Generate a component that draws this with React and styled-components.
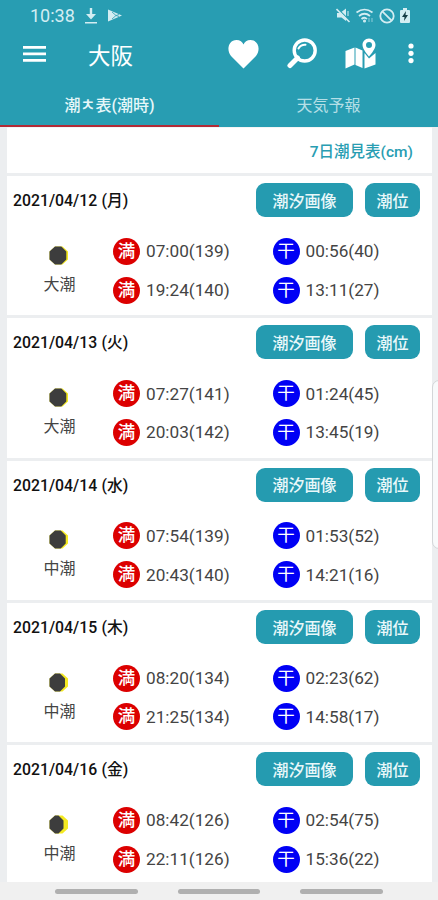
import React from "react";
import styled, { createGlobalStyle } from "styled-components";

const Global = createGlobalStyle`
  * { box-sizing: border-box; }
  body { margin: 0; background: #eceef0; font-family: Roboto, "Noto Sans CJK JP", sans-serif; }
  svg { display: block; flex: none; }
`;
const Screen = styled.div`
  position: relative; width: 438px; height: 900px; overflow: hidden;
  display: flex; flex-direction: column; background: #eceef0;
`;
const Header = styled.header`
  height: 127px; flex: none; background: #289db2; color: #fff;
  display: flex; flex-direction: column;
`;
const StatusBar = styled.div`
  height: 31px; padding: 0 28px 0 30px; display: flex; align-items: center;
  color: #d3edf2;
`;
const Clock = styled.span`
  width: 55px; font-size: 18px; line-height: 31px; white-space: nowrap;
`;
const StatusIcons = styled.div`
  display: flex; align-items: center; gap: ${(p) => p.$gap}px; margin-left: ${(p) => (p.$end ? "auto" : 0)};
`;
const Toolbar = styled.div`
  height: 45px; display: flex; align-items: center; padding: 0 24px 0 23px;
`;
const Title = styled.h1`
  margin: 5px 0 0 42px; font-size: 22.5px; font-weight: 400; line-height: 30px;
`;
const Actions = styled.div`
  margin-left: auto; display: flex; align-items: center;
  gap: 28px;
  & > :last-child { margin-left: 4px; }
`;
const Tabs = styled.nav`
  flex: 1; display: grid; grid-template-columns: 1fr 1fr;
`;
const Tab = styled.div`
  display: flex; align-items: center; justify-content: center; padding-top: 7px;
  font-size: 16px; font-weight: ${(p) => (p.$active ? 500 : 400)};
  color: ${(p) => (p.$active ? "#e6f7f9" : "#b5dfe6")};
  border-bottom: 2px solid ${(p) => (p.$active ? "#b22a35" : "#289db2")};
`;
const SmallGlyph = styled.span`
  width: 15px; padding-top: 4px; display: flex; justify-content: center; font-size: 16.5px; line-height: 20px; font-weight: 500;
`;
const List = styled.main`
  flex: none; height: 755px; padding: 0 6px 0 7px; overflow: hidden;
`;
const Summary = styled.div`
  height: 46px; background: #fff; display: flex; align-items: center; justify-content: flex-end;
  padding: 0 19px 2px 0; margin-bottom: 3.2px; border-top: 1px solid #f3f5f5;
  color: #289db2; font-size: 15.5px; font-weight: 500;
`;
const Card = styled.section`
  height: 139.3px; margin-bottom: 3px; background: #fff;
`;
const CardHead = styled.div`
  height: 41px; padding: 7px 12px 0 6px; display: flex; align-items: center;
`;
const DateText = styled.h2`
  margin: 0 auto 1px 0; font-size: 15.8px; font-weight: 500; color: #111; word-spacing: 0.5px;
`;
const Button = styled.button`
  width: ${(p) => p.$w}px; height: 34px; margin-left: 12px; padding: 0 0 1px; border: 0; border-radius: 9px;
  background: #259bb0; color: #e9f8fa; font: 500 16px Roboto, "Noto Sans CJK JP", sans-serif;
`;
const CardBody = styled.div`
  display: grid; grid-template-columns: 106px 159.5px 1fr; padding-top: 14.7px;
`;
const Phase = styled.div`
  display: flex; flex-direction: column; align-items: center; padding: 14px 1px 0 0;
  color: #444; font-size: 16px; line-height: 24px;
`;
const Moon = styled.svg`margin: 0 1px 8px 0;`;
const Times = styled.div`
  display: grid; grid-auto-rows: 38.8px;
`;
const Time = styled.div`
  display: flex; align-items: center; gap: 6px; font-size: 17.2px; color: #444;
  white-space: nowrap;
`;
const Badge = styled.span`
  width: 27px; height: 27px; border-radius: 50%; flex: none;
  display: flex; align-items: center; justify-content: center;
  color: #fff; font-size: 17.5px; font-weight: ${(p) => (p.$high ? 500 : 400)}; line-height: 27px;
  background: ${(p) => (p.$high ? "#dc0000" : "#0000f5")};
`;
const NavBar = styled.footer`
  height: 18px; background: #f0f0f0; display: flex; justify-content: center; gap: 40px; padding-top: 7px;
`;
const NavPill = styled.span`
  width: 82.5px; height: 4.5px; border-radius: 3px; background: #b0b0b0;
`;
const EdgeHandle = styled.div`
  position: absolute; left: 432px; top: 380px; width: 20px; height: 169px;
  background: #f8fafb; border: 1px solid #d3d6d8; border-radius: 7px;
`;

const days = [
  ["2021/04/12 (月)", "大潮", 1.7, ["07:00(139)", "19:24(140)"], ["00:56(40)", "13:11(27)"]],
  ["2021/04/13 (火)", "大潮", 1.7, ["07:27(141)", "20:03(142)"], ["01:24(45)", "13:45(19)"]],
  ["2021/04/14 (水)", "中潮", 2.3, ["07:54(139)", "20:43(140)"], ["01:53(52)", "14:21(16)"]],
  ["2021/04/15 (木)", "中潮", 3, ["08:20(134)", "21:25(134)"], ["02:23(62)", "14:58(17)"]],
  ["2021/04/16 (金)", "中潮", 4.5, ["08:42(126)", "22:11(126)"], ["02:54(75)", "15:36(22)"]],
];

function MoonPhase({ lit }) {
  const r = 19 - lit;
  return (
    <Moon width="20" height="19" viewBox="0 0 20 19">
      <path d="M6 .5H13.500L19 5.500V13.500L13.500 18.500H6L0.500 13.500V5.500Z" fill="#f4e920" />
      <path d={`M6 .5H${r - 5}L${r} 5.500V13.500L${r - 5} 18.500H6L0.500 13.500V5.500Z`} fill="#3d3d3d" />
    </Moon>
  );
}

function TimeList({ high, items }) {
  return (
    <Times>
      {items.map((t) => (
        <Time key={t}><Badge $high={high}>{high ? "満" : "干"}</Badge>{t}</Time>
      ))}
    </Times>
  );
}

const MenuIcon = () => (
  <svg width="23" height="18" viewBox="0 0 23 18" fill="#fff">
    <path d="M0 1h23v2.700H0zM0 7.500h23v2.700H0zM0 14h23v2.700H0z" />
  </svg>
);
const HeartIcon = () => (
  <svg width="31" height="30" viewBox="0 0 31 30" fill="#fff">
    <path d="M15.500 29.500L3 17C-2 11 .5 1 8.500 1C12 1 14.500 3 15.500 5.500C16.500 3 19 1 22.500 1C30.500 1 33 11 28 17Z" />
  </svg>
);
const SearchIcon = () => (
  <svg width="30" height="31" viewBox="0 0 30 31" fill="none" stroke="#fff" strokeLinecap="round">
    <circle cx="17.700" cy="12.500" r="10.500" strokeWidth="3.400" />
    <path d="M10.500 20L3 27.500" strokeWidth="5" />
    <path d="M11.500 10.500Q14 6.500 18.500 6.800" strokeWidth="2" />
  </svg>
);
const MapIcon = () => (
  <svg width="31" height="31" viewBox="0 0 31 31" fill="#fff">
    <path d="M.5 13L9.500 9.500V26.500L.5 30.500ZM10.500 9.500L17.500 12.500V30L10.500 27ZM19.500 15L24 20.500L30.500 15V26.500L19.500 30.500Z" />
    <path fillRule="evenodd" d="M24 .5C20 .5 17.500 3.500 17.500 7C17.500 11.500 24 18.500 24 18.500S30.500 11.500 30.500 7C30.500 3.500 28 .5 24 .5ZM24 4A3 3 0 1 1 24 10A3 3 0 1 1 24 4Z" />
  </svg>
);
const MoreIcon = () => (
  <svg width="6" height="21" viewBox="0 0 6 21" fill="#fff">
    <circle cx="3" cy="3" r="2.600" /><circle cx="3" cy="10.300" r="2.600" /><circle cx="3" cy="17.600" r="2.600" />
  </svg>
);
const DownloadIcon = () => (
  <svg width="12" height="16" viewBox="0 0 12 16" fill="currentColor">
    <path d="M4.800 0h2.400v6H11L6 11.500L1 6h3.800zM0 14h12v1.500H0z" />
  </svg>
);
const PlayIcon = () => (
  <svg width="14" height="13" viewBox="0 0 14 13">
    <path d="M0 .5L14 6.500L0 12.500Z" fill="currentColor" />
    <path d="M4 3l4 3.500l-4 3.500M8 6.500l3-1M8 6.500l3 1" stroke="#289db2" strokeWidth=".8" fill="none" />
  </svg>
);
const MuteIcon = () => (
  <svg width="15" height="15" viewBox="0 0 15 15" fill="currentColor">
    <path d="M1 5H4L10 .5V13L5.500 9.500H1Z" />
    <path d="M12 3v5" stroke="currentColor" />
    <path d="M1.500 .5L14 13" stroke="#289db2" strokeWidth="1.200" />
    <path d="M.5 1L13.500 14" stroke="currentColor" strokeWidth="1.600" />
  </svg>
);
const WifiIcon = () => (
  <svg width="18" height="15" viewBox="0 0 18 15" fill="none" stroke="currentColor" strokeWidth="1.700">
    <path d="M.5 4.500Q8.500 -1.500 16.500 4.500M3 8Q8.500 3.500 14 8M5.500 11Q8.500 8.500 11 11" />
    <circle cx="8.500" cy="13" r=".7" /><path d="M13 10v4M16 10v4" strokeWidth="1" opacity=".6" />
  </svg>
);
const BlockIcon = () => (
  <svg width="16" height="16" viewBox="0 0 16 16" fill="none" stroke="currentColor" strokeWidth="1.800">
    <circle cx="8" cy="8" r="6.700" /><path d="M3.300 3.300L12.700 12.700" />
  </svg>
);
const BatteryIcon = () => (
  <svg width="10" height="15" viewBox="0 0 10 15">
    <path d="M3 0h4v2h2q1 0 1 1v11q0 1-1 1H1q-1 0-1-1V3q0-1 1-1h2z" fill="currentColor" />
    <path d="M6 3L2 9h2.500L4 13l4-6H5.500z" fill="#173d45" />
  </svg>
);

export default function App() {
  return (
    <>
      <Global />
      <Screen>
        <Header>
          <StatusBar>
            <Clock>10:38</Clock>
            <StatusIcons $gap={11}><DownloadIcon /><PlayIcon /></StatusIcons>
            <StatusIcons $end $gap={5}><MuteIcon /><WifiIcon /><BlockIcon /><BatteryIcon /></StatusIcons>
          </StatusBar>
          <Toolbar>
            <MenuIcon />
            <Title>大阪</Title>
            <Actions><HeartIcon /><SearchIcon /><MapIcon /><MoreIcon /></Actions>
          </Toolbar>
          <Tabs>
            <Tab $active>潮<SmallGlyph>ㅊ</SmallGlyph>表(潮時)</Tab>
            <Tab>天気予報</Tab>
          </Tabs>
        </Header>
        <List>
          <Summary>7日潮見表(cm)</Summary>
          {days.map(([date, tide, lit, high, low]) => (
            <Card key={date}>
              <CardHead>
                <DateText>{date}</DateText>
                <Button $w={97}>潮汐画像</Button>
                <Button $w={55}>潮位</Button>
              </CardHead>
              <CardBody>
                <Phase><MoonPhase lit={lit} />{tide}</Phase>
                <TimeList high items={high} />
                <TimeList items={low} />
              </CardBody>
            </Card>
          ))}
        </List>
        <NavBar><NavPill /><NavPill /><NavPill /></NavBar>
        <EdgeHandle />
      </Screen>
    </>
  );
}
